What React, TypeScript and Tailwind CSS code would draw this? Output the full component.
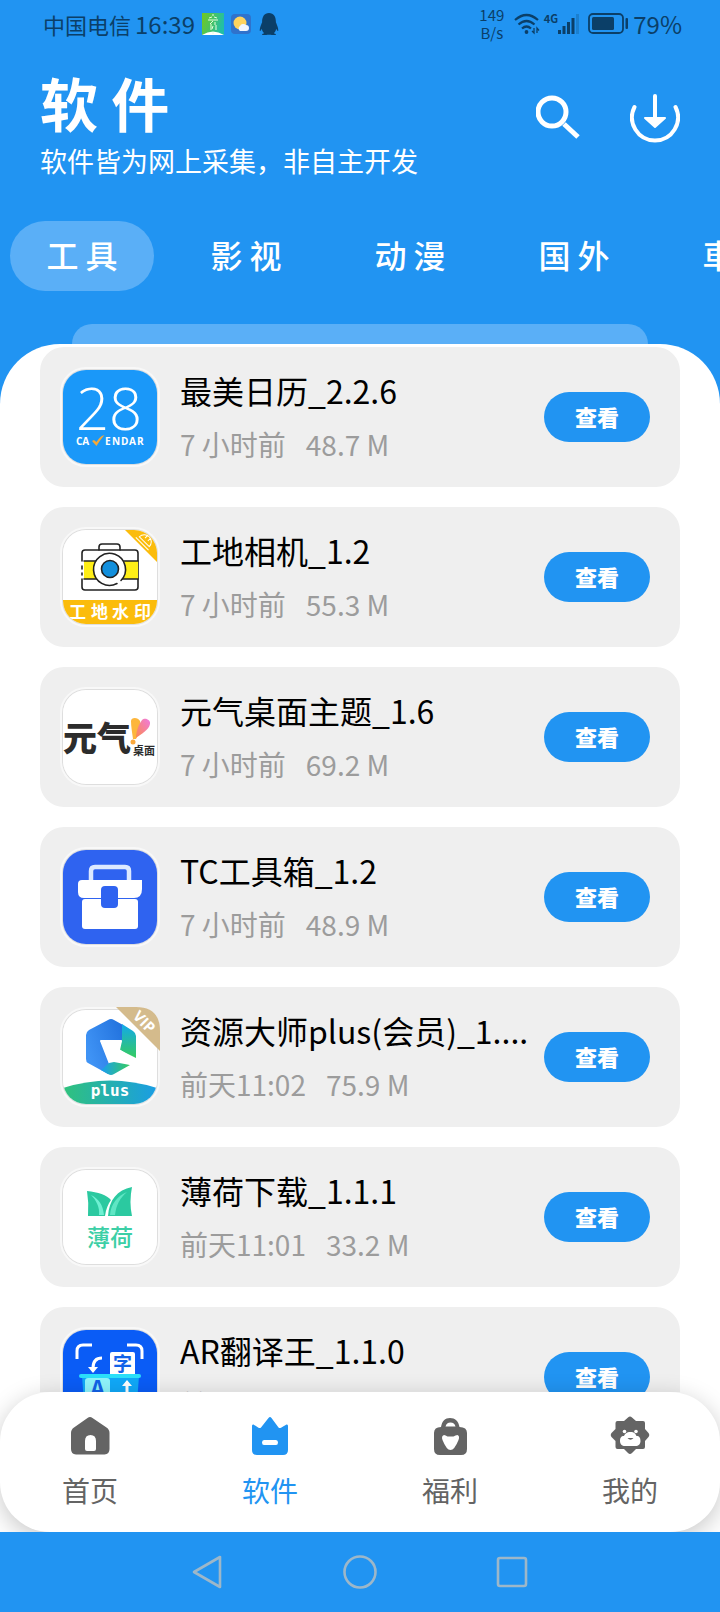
import type { ReactNode } from 'react';
import { FaQq } from 'react-icons/fa';

interface AppItem {
  name: string;
  time: string;
  size: string;
  icon: ReactNode;
  badge?: ReactNode;
}

const CJK = "'Noto Sans CJK SC', sans-serif";

const CalendarIcon = () => (
  <svg viewBox="0 0 94 94" className="size-full bg-[#1a98f9]" fill="#fff">
    <text x="46" y="60" fontSize="58" fontWeight="300" textAnchor="middle" fontFamily="'Open Sans', sans-serif">28</text>
    <text x="13" y="75" fontSize="10" fontWeight="700" fontFamily="'Open Sans', sans-serif">CA</text>
    <path d="M29 71l2-1 2.500 2c2-3 4-6 8-7-3 4-6 7-8 11z" fill="#f2a93b" />
    <text x="42 49 58 66 74" y="75" fontSize="10" fontWeight="700" fontFamily="'Open Sans', sans-serif">ENDAR</text>
  </svg>
);

const CameraIcon = () => (
  <svg viewBox="0 0 94 94" className="size-full bg-white">
    <path d="M62 0h32v32z" fill="#fbbc0c" />
    <g transform="rotate(45 82 11)" fill="none" stroke="#fff" strokeWidth="1">
      <path d="M75 12a7 7 0 0 1 14 0zM80 5v4M84 5v4M73 15h18" />
    </g>
    <g stroke="#222" strokeWidth="1.6" fill="none" strokeLinecap="round">
      <path d="M36 20v-3q0-3 3-3h15q3 0 3 3v3" />
      <path d="M19 31v-8q0-3 3-3h50q3 0 3 3v34q0 3-3 3H22q-3 0-3-3v-8M19 36v3M19 43v2" />
      <path d="M21 31h54v18H21z" fill="#ffee16" stroke="none" />
      <path d="M21 31h54M21 49h54" />
      <circle cx="47" cy="39" r="16" fill="#fff" stroke="none" />
      <path d="M54 53.500a16 16 0 1 1 4-3" />
      <circle cx="47" cy="39" r="8.500" fill="#128fdc" />
    </g>
    <path d="M0 70h94v24H0z" fill="#fbbc0c" />
    <text x="6 28 49 71" y="88" fontSize="17" fontWeight="700" fill="#fff" fontFamily={CJK}>工地水印</text>
  </svg>
);

const YuanqiIcon = () => (
  <svg viewBox="0 0 94 94" className="size-full bg-white">
    <defs>
      <linearGradient id="heart" x1="0" y1="1" x2="1" y2="0">
        <stop offset="0" stopColor="#fb8a4b" />
        <stop offset="1" stopColor="#f07ae0" />
      </linearGradient>
    </defs>
    <text x="0" y="61" fontSize="34" fontWeight="900" fill="#2c2c2c" fontFamily={CJK}>元气</text>
    <path d="M70 49c-1-7-2-13-2-18 0-4 7-4 9 0l1 6-5 12z" fill="#fdb63c" />
    <path d="M73 48c0-7 3-14 6-18 3-3 9 0 8 4-1 6-9 10-14 14z" fill="url(#heart)" />
    <circle cx="70" cy="52" r="2.500" fill="#fba93c" />
    <text x="70" y="65" fontSize="11" fontWeight="700" fill="#2c2c2c" fontFamily={CJK}>桌面</text>
  </svg>
);

const ToolboxIcon = () => (
  <svg viewBox="0 0 94 94" className="size-full bg-[#2f63f0]">
    <path d="M28 31V21q0-4 4-4h30q4 0 4 4v10" fill="none" stroke="#dce9ff" strokeWidth="4.500" />
    <path d="M19 30h60v9q0 9-8 9H21q-6 0-6-6v-8q0-4 4-4z" fill="#fff" />
    <rect x="19" y="49" width="56" height="30" rx="3" fill="#fff" />
    <rect x="38" y="36" width="17" height="22" rx="4" fill="#2f63f0" />
  </svg>
);

const PlusIcon = () => (
  <svg viewBox="0 0 94 94" className="size-full bg-white">
    <defs>
      <linearGradient id="hexBlue" x1="0" y1="0.500" x2="1" y2="0">
        <stop offset="0" stopColor="#3f93f5" />
        <stop offset="1" stopColor="#2070dc" />
      </linearGradient>
      <linearGradient id="hexGreen" x1="0" y1="0" x2="0" y2="1">
        <stop offset="0" stopColor="#12a8ec" />
        <stop offset="1" stopColor="#36cc60" />
      </linearGradient>
      <linearGradient id="hexBottom" x1="0" y1="0" x2="1" y2="0">
        <stop offset="0" stopColor="#1b9df0" />
        <stop offset="1" stopColor="#36cc60" />
      </linearGradient>
      <linearGradient id="plusBand" x1="0" y1="0" x2="1" y2="0">
        <stop offset="0" stopColor="#30c27c" />
        <stop offset="1" stopColor="#1a9de4" />
      </linearGradient>
    </defs>
    <path d="M45 10q3-2 6 0l9 5v16H37l9 23-1 10-20-11q-2-1-2-4V25q0-3 3-5z" fill="url(#hexBlue)" />
    <path d="M59 14l11 7q3 2 3 5v22l-16-8 2-9z" fill="url(#hexGreen)" />
    <path d="M38 60l8-7 5-1 16 3-16 9q-3 2-6 0z" fill="url(#hexBottom)" />
    <path d="M37 30h22l-3 9 16 10-5 6-15-9-5 6z" fill="#fff" />
    <path d="M0 78q47-15 94 0v16H0z" fill="url(#plusBand)" />
    <text x="47" y="86" fontSize="16" fontWeight="700" fill="#fff" textAnchor="middle" fontFamily="'DejaVu Sans Mono', monospace">plus</text>
  </svg>
);

const VipRibbon = () => (
  <svg viewBox="0 0 100 100" className="absolute -inset-[3px] size-[100px]">
    <path d="M56 0h20q24 0 24 24v20z" fill="#d4bb8c" />
    <text x="0" y="5" transform="translate(84 15) rotate(45)" fontSize="15" fontWeight="700" fill="#fff" textAnchor="middle" fontFamily="'Open Sans', sans-serif">VIP</text>
  </svg>
);

const MintIcon = () => (
  <svg viewBox="0 0 94 94" className="size-full bg-white">
    <path d="M24 21c11 1 20 4 24 9-3 4-5 9-6 16H25q1-13-1-25z" fill="#2bc9a0" />
    <path d="M69 17q-3 15 0 29H45c1-16 9-26 24-29z" fill="#2bc9a0" />
    <path d="M28 25c8 4 12 10 13 20h-5c1-8-3-15-8-20z" fill="#6ff0d2" />
    <path d="M64 22c-7 6-11 13-12 23h-5c1-11 7-19 17-23z" fill="#5fe6c4" />
    <text x="47" y="76" fontSize="23" fontWeight="500" fill="#3ccfa6" textAnchor="middle" fontFamily={CJK}>薄荷</text>
  </svg>
);

const TranslateIcon = () => (
  <svg viewBox="0 0 94 94" className="size-full bg-[#0a5cf6]">
    <g fill="none" stroke="#fff" strokeWidth="3">
      <path d="M14 29v-8q0-6 6-6h9M64 15h9q6 0 6 6v8" />
      <path d="M39 28q-9 0-9 10" strokeWidth="3" />
    </g>
    <path d="M25 37h10l-5 6z" fill="#fff" />
    <rect x="47" y="22" width="25" height="26" rx="2" fill="#fff" />
    <text x="59.500" y="41" fontSize="19" fontWeight="700" fill="#1262e8" textAnchor="middle" fontFamily={CJK}>字</text>
    <path d="M19 46h57l-3 40H22z" fill="#10a8f8" />
    <rect x="16" y="44" width="62" height="4" rx="2" fill="#2be0fa" />
    <rect x="22" y="48" width="25" height="30" rx="3" fill="#8ff4fb" />
    <text x="34.500" y="67" fontSize="23" fontWeight="700" fill="#1262e8" textAnchor="middle" fontFamily={CJK}>A</text>
    <path d="M64 50l5 6h-3.500v10h-3V56H59z" fill="#fff" />
  </svg>
);

const apps: AppItem[] = [
  { name: '最美日历_2.2.6', time: '7 小时前', size: '48.7 M', icon: <CalendarIcon /> },
  { name: '工地相机_1.2', time: '7 小时前', size: '55.3 M', icon: <CameraIcon /> },
  { name: '元气桌面主题_1.6', time: '7 小时前', size: '69.2 M', icon: <YuanqiIcon /> },
  { name: 'TC工具箱_1.2', time: '7 小时前', size: '48.9 M', icon: <ToolboxIcon /> },
  { name: '资源大师plus(会员)_1....', time: '前天11:02', size: '75.9 M', icon: <PlusIcon />, badge: <VipRibbon /> },
  { name: '薄荷下载_1.1.1', time: '前天11:01', size: '33.2 M', icon: <MintIcon /> },
  { name: 'AR翻译王_1.1.0', time: '前天11:00', size: '45.1 M', icon: <TranslateIcon /> },
];

const tabs = ['工 具', '影 视', '动 漫', '国 外', '車 机'];

const navItems = [
  {
    label: '首页',
    icon: (
      <path
        fillRule="evenodd"
        d="M17.500 2q2.500-2 5 0l14 9.500q3 2 3 5.500v16q0 5-5 5.500H6q-5-.5-5-5.500V17q0-3.500 3-5.500zM20.500 19q-5.500 0-5.500 6v8q0 2 2 2h7q2 0 2-2v-8q0-6-5.500-6z"
      />
    ),
  },
  {
    label: '软件',
    icon: (
      <path
        fillRule="evenodd"
        d="M18.500 2q1.500-2 3 0l7 9.500q1 1 2.500.3l5.500-3.300q1.500-.5 1.500 1.500v24q0 5-5 5H7q-5 0-5-5V10q0-2 1.500-1.500l5 3.300q1.500.7 2.500-.3zM14 24q-2 0-2 2.500t2 2.500h12q2 0 2-2.500T26 24z"
      />
    ),
  },
  {
    label: '福利',
    icon: (
      <path
        fillRule="evenodd"
        d="M11 11C12 5 15 2 20 2s8.500 3 9.500 9q7.500 0 7.500 6v16q0 6-6 6H10q-6 0-6-6V17q0-6 7-6zM15.500 10.500h10q-1-4-5-4t-5 4zM14 19q-3 1-1.500 5 4 10 8 10t8-10q1.500-4-1-5-2 0-4 1.500h-6Q15.500 19 14 19z"
      />
    ),
  },
  {
    label: '我的',
    icon: (
      <>
        <path d="M18 1.500q2-2 4 0L26 5h7q2 0 2 2v6l3.500 4q1.500 2 0 4L35 25v6q0 2-2 2h-7l-4 4q-2 2-4 0l-4-4H7.500q-2 0-2-2v-6l-4-4q-1.500-2 0-4l4-4V7q0-2 2-2H14z" />
        <g fill="#fff">
          <circle cx="14.500" cy="15.500" r="1.800" />
          <circle cx="26" cy="15.500" r="1.800" />
          <path d="M20.500 16c4 0 5 2 6 4 3 0 4 2 4 5s-2 5-5 5H15c-3 0-5-2-5-5s1-5 4-5c1-2 2.500-4 6.500-4z" />
        </g>
        <path d="M17.500 22h6q-3 3.500-6 0z" />
      </>
    ),
  },
];

function StatusBar() {
  return (
    <div className="flex h-12 items-center justify-between pl-[43px] pr-[38px] text-[#0b3f68]">
      <div className="flex items-center">
        <span className="text-[22px] leading-[46px]">中国电信</span>
        <span className="ml-1 text-2xl leading-[46px]">16:39</span>
        <svg viewBox="0 0 22 22" className="ml-[7px] size-[22px]">
          <defs>
            <linearGradient id="cai" x1="0" y1="0" x2="1" y2="0.300">
              <stop offset="0" stopColor="#74c81c" />
              <stop offset="1" stopColor="#22bfa4" />
            </linearGradient>
          </defs>
          <path d="M0 0h22v22H0z" fill="url(#cai)" />
          <path d="M0 22q11-7 22 0z" fill="#fff" />
          <path d="M11 1v2M7 5l3-1M15 5l-3-1M6 7h10M11 8l-3 3M13 9v3M9 11v6M14 12v5M11 13l-1 3M11 19v2" stroke="#e6ffdc" fill="none" />
        </svg>
        <svg viewBox="0 0 20 20" className="ml-[7px] size-5">
          <rect width="20" height="20" rx="4" fill="#2f72cc" />
          <circle cx="9" cy="9" r="6.500" fill="#ffd45e" />
          <path d="M9 17a3 3 0 0 1 0-5 4 4 0 0 1 6-1 3 3 0 0 1 0 6z" fill="#f1f6ff" />
        </svg>
        <FaQq className="ml-[7px] size-[22px]" />
      </div>
      <div className="flex items-center">
        <div className="w-[26px] text-center text-[15px] leading-[18px]">
          <p>149</p>
          <p>B/s</p>
        </div>
        <svg viewBox="0 0 26 22" className="ml-[9px] h-[22px] w-[26px]" fill="none" stroke="currentColor" strokeWidth="2.200">
          <path d="M1 7q11.500-10 23 0M4.500 11.500q8-7 16 0M8 15.500q4.500-4 9 0" />
          <circle cx="12.500" cy="19" r="1.900" fill="currentColor" stroke="none" />
          <path d="M20 15v5l-2-2M23 20v-5l2 2.500" strokeWidth="1.300" />
        </svg>
        <span className="ml-1 pb-3 text-[11px] font-bold leading-[15px]">4G</span>
        <svg viewBox="0 0 22 20" className="h-5 w-[22px]" fill="currentColor">
          <path d="M0 16h3v4H0zM4.500 12h3v8h-3zM9 8h3v12H9zM13.500 4h3v16h-3z" />
          <path d="M18 0h3v20h-3z" opacity=".25" />
        </svg>
        <svg viewBox="0 0 41 22" className="ml-2 h-[22px] w-[41px]" fill="currentColor">
          <rect x="1" y="1" width="34" height="19" rx="4" fill="none" stroke="currentColor" strokeWidth="1.800" />
          <rect x="4" y="4" width="22" height="13" rx="1.500" />
          <rect x="37.500" y="5" width="2.500" height="11" rx="1" />
        </svg>
        <span className="ml-1 text-2xl leading-[46px]">79%</span>
      </div>
    </div>
  );
}

function AppCard({ name, time, size, icon, badge }: AppItem) {
  return (
    <li className="flex h-[140px] items-center rounded-3xl bg-[#efefef] pl-5 pr-[30px]">
      <div className="relative size-[100px] shrink-0 rounded-[26px] border-[3px] border-[#f8f8f8]">
        <div className="size-full overflow-hidden rounded-[23px] ring-1 ring-black/10">{icon}</div>
        {badge}
      </div>
      <div className="ml-5 min-w-0 flex-1">
        <h2 className="truncate text-[32px] leading-[50px] text-black">{name}</h2>
        <p className="mt-1 flex gap-5 text-[28px] leading-[50px] text-[#9c9c9c]">
          <span>{time}</span>
          <span>{size}</span>
        </p>
      </div>
      <button className="ml-2 h-[50px] w-[106px] shrink-0 rounded-full bg-[#2194f2] pb-[2px] text-[22px] font-black text-white">
        查看
      </button>
    </li>
  );
}

export default function App() {
  return (
    <div className="flex h-screen flex-col overflow-hidden bg-[#2194f2] font-['Noto_Sans_CJK_SC',sans-serif]">
      <StatusBar />

      <header className="flex items-center justify-between px-10 pt-5 text-white">
        <div>
          <h1 className="text-[58px] font-bold leading-[68px]">软 件</h1>
          <p className="text-[27px] leading-[50px]">软件皆为网上采集，非自主开发</p>
        </div>
        <div className="flex gap-[50px] pb-[18px]">
          <button aria-label="搜索">
            <svg viewBox="0 0 44 50" className="h-[50px] w-11" fill="none" stroke="currentColor">
              <circle cx="16" cy="19" r="14" strokeWidth="5" />
              <path d="M28 31l14 13" strokeWidth="5" />
            </svg>
          </button>
          <button aria-label="下载">
            <svg viewBox="0 0 50 50" className="size-[50px]" fill="none" stroke="currentColor" strokeWidth="4" strokeLinecap="round">
              <path d="M4.500 14A23 23 0 1 0 45.500 14" />
              <path d="M25 3v24" />
              <path d="M15 25h20L25 34z" fill="currentColor" strokeWidth="2" strokeLinejoin="round" />
            </svg>
          </button>
        </div>
      </header>

      <div className="mt-[35px] flex shrink-0 gap-5 overflow-hidden pl-[10px] text-white">
        {tabs.map((tab, i) => (
          <button
            key={tab}
            className={`h-[70px] w-36 shrink-0 rounded-full pb-1 text-[32px] font-medium ${i === 0 ? 'bg-[#5aaff7]' : ''}`}
          >
            {tab}
          </button>
        ))}
      </div>

      <div className="mx-[72px] mt-[33px] h-5 shrink-0 rounded-t-[20px] bg-[#5aaff7]" />

      <main className="min-h-0 flex-1 overflow-hidden rounded-t-[60px] bg-white px-10 pt-[3px]">
        <ul className="flex flex-col gap-5">
          {apps.map((app) => (
            <AppCard key={app.name} {...app} />
          ))}
        </ul>
      </main>

      <div className="relative z-10 shrink-0 bg-white">
        <nav className="grid h-[140px] grid-cols-4 rounded-[50px] bg-white shadow-[0_6px_24px_rgba(0,0,0,0.22)]">
          {navItems.map((item, i) => (
            <button
              key={item.label}
              className={`flex flex-col items-center pt-6 ${i === 1 ? 'text-[#2194f2]' : 'text-[#646464]'}`}
            >
              <svg viewBox="0 0 40 40" className="size-10" fill="currentColor">
                {item.icon}
              </svg>
              <span className="mt-[14px] text-[28px] leading-10">{item.label}</span>
            </button>
          ))}
        </nav>
      </div>

      <div className="relative z-20 flex h-20 shrink-0 items-center justify-center gap-[117px] bg-[#2194f2] text-[#9db7c9]">
        <button aria-label="返回">
          <svg viewBox="0 0 34 36" className="h-9 w-[34px]" fill="none" stroke="currentColor" strokeWidth="2.600" strokeLinejoin="round">
            <path d="M3 18L29 3v30z" />
          </svg>
        </button>
        <button aria-label="主屏幕">
          <svg viewBox="0 0 36 36" className="size-9" fill="none" stroke="currentColor" strokeWidth="2.600">
            <circle cx="18" cy="18" r="15.500" />
          </svg>
        </button>
        <button aria-label="最近任务">
          <svg viewBox="0 0 34 36" className="h-9 w-[34px]" fill="none" stroke="currentColor" strokeWidth="2.600">
            <rect x="3" y="4" width="28" height="28" rx="2" />
          </svg>
        </button>
      </div>
    </div>
  );
}
